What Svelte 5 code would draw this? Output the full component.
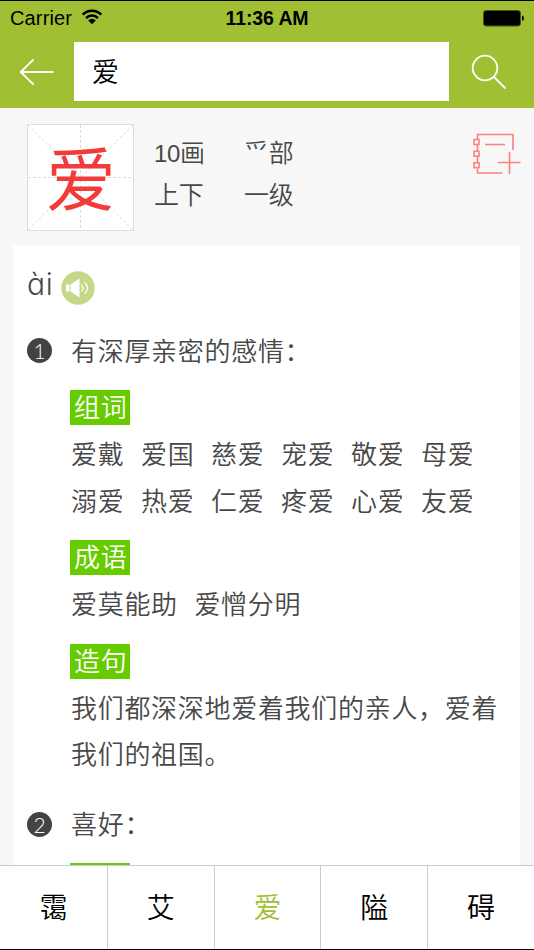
<script>
    const info = ['画', '爫部', '上下', '一级'];
    const strokes = 10;

    const meanings = [
        {
            text: '有深厚亲密的感情：',
            words: ['爱戴', '爱国', '慈爱', '宠爱', '敬爱', '母爱', '溺爱', '热爱', '仁爱', '疼爱', '心爱', '友爱'],
            idioms: ['爱莫能助', '爱憎分明'],
            sentence: '我们都深深地爱着我们的亲人，爱着我们的祖国。'
        },
        {
            text: '喜好：',
            words: [],
            idioms: [],
            sentence: null
        }
    ];

    const homophones = ['霭', '艾', '爱', '隘', '碍'];

    let query = $state('爱');
    let selected = $state('爱');

    const select = (character) => {
        selected = character;
        query = character;
    };
</script>

<div class="screen">
    <header>
        <div class="status">
            <div class="carrier">
                <span>Carrier</span>
                <svg width="22" height="16" viewBox="0 0 22 16">
                    <path d="M1.7 5.6a13 13 0 0 1 18.6 0M5 9.1a8.4 8.4 0 0 1 12 0" fill="none" stroke="#000" stroke-width="2.5" />
                    <path d="M7.2 11.4a5.3 5.3 0 0 1 7.6 0L11 15.2z" />
                </svg>
            </div>
            <div class="time">11:36 AM</div>
            <div class="battery">
                <svg width="41" height="17" viewBox="0 0 41 17">
                    <rect x=".5" y=".5" width="37" height="15.5" rx="2.5" fill="#000" stroke="#47580f" />
                    <path d="M39 5.5q2 .8 2 2.7t-2 2.8z" />
                </svg>
            </div>
        </div>
        <div class="search">
            <button class="back" aria-label="Back">
                <svg width="36" height="28" viewBox="0 0 36 28">
                    <path d="M14 2L1.7 14l12.3 12M1.7 14h32" />
                </svg>
            </button>
            <input type="text" aria-label="Character" bind:value={query}>
            <button class="find" aria-label="Search">
                <svg width="36" height="36" viewBox="0 0 36 36">
                    <circle cx="14" cy="14" r="12.3" />
                    <path d="M23 23l11 11" />
                </svg>
            </button>
        </div>
    </header>

    <main>
        <section class="summary">
            <div class="grid">
                <svg width="107" height="107" viewBox="0 0 107 107">
                    <path d="M53.5 1v105M1 53.5h105M1 1l105 105M106 1L1 106" />
                </svg>
                <span>爱</span>
            </div>
            <div class="info">
                {#each info as item, i}
                    <span>{#if i === 0}<b>{strokes}</b>{/if}{item}</span>
                {/each}
            </div>
            <button class="note" aria-label="Add to notebook">
                <svg width="48" height="42" viewBox="0 0 48 42">
                    <path d="M4.5 6V1.5h35.5V17M4.5 12v6M4.5 24v5.5M4.5 35.5v4.5H29.5M12 11.5h20M36.5 19v22M25 29.5h22.5" />
                    <path d="M1 6.5h5v5H1zM1 18.2h5v5H1zM1 29.8h5v5H1z" />
                </svg>
            </button>
        </section>

        <article>
            <div class="reading">
                <span>ài</span>
                <button class="speaker" aria-label="Play">
                    <svg width="34" height="34" viewBox="0 0 34 34">
                        <circle cx="17" cy="17" r="16.7" fill="#c5d887" />
                        <path d="M5 13.5h3.6v7H5zM9.5 13.5L18.5 7.5v19l-9-6z" fill="#fff" />
                        <path d="M20.3 13.6q3.5 3.4 0 6.8M23.5 11.2q6 5.8 0 11.6" fill="none" stroke="#fff" stroke-width="1.3" />
                    </svg>
                </button>
            </div>

            {#each meanings as meaning, i}
                <div class="meaning">
                    <div class="number"><span>{i + 1}</span></div>
                    <div class="body">
                        <p>{meaning.text}</p>
                        <h3>组词</h3>
                        <div class="words">
                            {#each meaning.words as word}
                                <span>{word}</span>
                            {/each}
                        </div>
                        {#if meaning.idioms.length}
                            <h3>成语</h3>
                            <div class="words">
                                {#each meaning.idioms as idiom}
                                    <span>{idiom}</span>
                                {/each}
                            </div>
                        {/if}
                        {#if meaning.sentence}
                            <h3>造句</h3>
                            <p>{meaning.sentence}</p>
                        {/if}
                    </div>
                </div>
            {/each}
        </article>
    </main>

    <nav>
        {#each homophones as character}
            <button class:selected={character === selected} onclick={() => select(character)}>{character}</button>
        {/each}
    </nav>
</div>

<style>
    :global(body) {
        margin: 0;
    }

    .screen {
        background: #f7f7f7;
        border-bottom: 1px solid #000;
        border-top: 1px solid #000;
        box-sizing: border-box;
        color: #484848;
        display: flex;
        flex-direction: column;
        font-family: "Noto Sans CJK SC", sans-serif;
        font-weight: 350;
        height: 950px;
        overflow: hidden;
        width: 534px;
    }

    button {
        background: none;
        border: none;
        color: inherit;
        font: inherit;
        margin: 0;
        padding: 0;
    }

    svg {
        display: block;
    }

    header {
        background: #a1bf33;
        flex: none;
        height: 107px;
    }

    .status {
        align-items: center;
        color: #000;
        display: grid;
        font-family: "Liberation Sans", Arial, sans-serif;
        font-size: 20px;
        font-weight: 400;
        grid-template-columns: 1fr auto 1fr;
        height: 35px;
        padding: 0 10px;
    }

    .carrier {
        align-items: center;
        display: flex;
        gap: 9px;
        letter-spacing: .15px;
    }

    .carrier svg {
        margin-top: -3px;
    }

    .time {
        font-weight: 700;
        font-size: 19.5px;
        letter-spacing: -.1px;
    }

    .battery {
        display: flex;
        justify-content: flex-end;
    }

    .search {
        align-items: center;
        display: flex;
        height: 59px;
        margin-top: 6px;
    }

    .back {
        padding: 0 19px;
    }

    .back svg,
    .find svg {
        fill: none;
        stroke: #fff;
        stroke-linecap: round;
        stroke-width: 1.8;
    }

    input {
        background: #fff;
        border: none;
        border-radius: 0;
        box-sizing: border-box;
        color: #000;
        font-family: inherit;
        font-size: 27px;
        font-weight: 350;
        height: 59px;
        outline: none;
        padding: 0 18px 2px;
        width: 375px;
    }

    .find {
        padding-left: 22px;
    }

    main {
        flex: 1;
        min-height: 0;
        overflow: hidden;
    }

    .summary {
        display: flex;
        height: 107px;
        padding: 16px 13px 14px 27px;
    }

    .grid {
        background: #fff;
        display: grid;
        height: 107px;
        outline: 1px solid #ddd;
        outline-offset: -1px;
        place-items: center;
        width: 107px;
    }

    .grid svg,
    .grid span {
        grid-area: 1 / 1;
    }

    .grid path {
        fill: none;
        stroke: #dcdcdc;
        stroke-dasharray: 3 2;
    }

    .grid span {
        color: #f33b3b;
        font-size: 70px;
        font-weight: 400;
        line-height: 103px;
        padding: 0 0 4px 1px;
    }

    .info {
        align-content: start;
        display: grid;
        flex: 1;
        font-size: 25px;
        grid-auto-rows: 42px;
        grid-template-columns: 90px 1fr;
        letter-spacing: -.3px;
        line-height: 42px;
        padding: 6px 0 0 20px;
    }

    .info b {
        font-family: "Liberation Sans", Arial, sans-serif;
        font-size: 24px;
        font-weight: 400;
        line-height: 1;
    }

    .note {
        align-self: flex-start;
        margin-top: 9px;
    }

    .note path {
        fill: none;
        stroke: #fb8080;
        stroke-width: 1.6;
    }

    article {
        background: #fff;
        height: 700px;
        margin: 0 14px 0 13px;
        padding-top: 26px;
    }

    .reading {
        align-items: center;
        display: flex;
        gap: 7px;
        height: 34px;
        margin-bottom: 21.5px;
        padding-left: 14px;
    }

    .reading span {
        font-family: Inter, sans-serif;
        font-feature-settings: "cv11";
        font-size: 30px;
        font-weight: 300;
        letter-spacing: .8px;
        line-height: 34px;
        padding-bottom: 8px;
    }

    .meaning {
        display: flex;
        margin-bottom: 23px;
    }

    .number {
        background: #434343;
        border-radius: 50%;
        color: #fff;
        display: flex;
        font-family: Lato, sans-serif;
        font-size: 21px;
        height: 25px;
        justify-content: center;
        line-height: 26px;
        margin: 11.5px 18px 0 14px;
        width: 25px;
    }

    .body {
        font-size: 26px;
        letter-spacing: .7px;
        line-height: 46.6px;
        width: 437px;
    }

    p {
        margin: 0;
        padding-left: 1px;
    }

    h3 {
        background: #66cc00;
        color: #fff;
        font-size: 26px;
        font-weight: 350;
        height: 35px;
        line-height: 32px;
        margin: 16.8px 0 5.2px;
        padding-left: 4px;
        width: 56px;
    }

    .words {
        column-gap: 16.6px;
        display: flex;
        flex-wrap: wrap;
        padding-left: 1px;
    }

    nav {
        background: #fff;
        border-top: 1px solid #ccc;
        color: #000;
        display: grid;
        flex: none;
        font-size: 28px;
        grid-template-columns: repeat(5, 1fr);
        height: 83px;
    }

    nav button {
        padding-bottom: 3px;
    }

    nav button + button {
        border-left: 1px solid #ccc;
    }

    .selected {
        color: #a1bf33;
    }
</style>
